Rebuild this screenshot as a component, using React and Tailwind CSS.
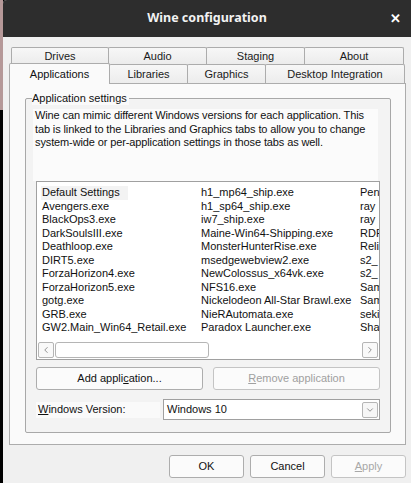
import { ChevronDown, ChevronLeft, ChevronRight } from "lucide-react";

const col1 = [
  "Default Settings",
  "Avengers.exe",
  "BlackOps3.exe",
  "DarkSoulsIII.exe",
  "Deathloop.exe",
  "DIRT5.exe",
  "ForzaHorizon4.exe",
  "ForzaHorizon5.exe",
  "gotg.exe",
  "GRB.exe",
  "GW2.Main_Win64_Retail.exe",
];

const col2 = [
  "h1_mp64_ship.exe",
  "h1_sp64_ship.exe",
  "iw7_ship.exe",
  "Maine-Win64-Shipping.exe",
  "MonsterHunterRise.exe",
  "msedgewebview2.exe",
  "NewColossus_x64vk.exe",
  "NFS16.exe",
  "Nickelodeon All-Star Brawl.exe",
  "NieRAutomata.exe",
  "Paradox Launcher.exe",
];

// third column is clipped by the list edge, only the visible part is kept
const col3 = ["Pen", "ray", "ray", "RDR", "Reli", "s2_", "s2_", "Sam", "Sam", "seki", "Sha"];

const Tab = ({ label, w }) => (
  <div
    className={`${w} h-full flex items-center justify-center border border-b-0 border-[#acacac] -ml-px first:ml-0 rounded-t-[2px] bg-gradient-to-b from-[#f7f7f7] to-[#ececec] text-[#1a1a1a]`}
  >
    {label}
  </div>
);

const Button = ({ children, className = "" }) => (
  <div
    className={`h-[23px] flex items-center justify-center border border-[#adadad] rounded-[3px] bg-[#fbfbfb] ${className}`}
  >
    {children}
  </div>
);

export default function App() {
  return (
    <div
      className="w-[411px] h-[483px] flex bg-black overflow-hidden text-[11px] text-[#111]"
      style={{ fontFamily: '"Liberation Sans", Arial, sans-serif' }}
    >
      {/* desktop strip */}
      <div className="w-[3px] flex flex-col">
        <div className="h-[110px] bg-[#b59898]" />
        <div className="flex-1 bg-black" />
      </div>

      {/* window */}
      <div className="flex-1 flex flex-col rounded-tl-[4px] overflow-hidden bg-[#f0f0f0]">
        <div className="h-[37px] bg-[#2d2d2d] relative flex items-center justify-center">
          <span
            className="text-[#f2f2f2] text-[12.5px] font-bold"
            style={{ fontFamily: '"Noto Sans", sans-serif' }}
          >
            Wine configuration
          </span>
          <span className="absolute right-[10px] top-[12px] text-white text-[13px] font-bold leading-none">
            ✕
          </span>
        </div>

        <div className="flex-1 flex flex-col pt-[10px]">
          {/* tabs row 1 */}
          <div className="h-[17px] flex ml-[8px]">
            <Tab label="Drives" w="w-[98px]" />
            <Tab label="Audio" w="w-[99px]" />
            <Tab label="Staging" w="w-[99px]" />
            <Tab label="About" w="w-[100px]" />
          </div>
          {/* tabs row 2 */}
          <div className="h-[19px] flex ml-[6px] relative z-10">
            <div className="w-[101px] h-[21px] -mt-[1px] flex items-center justify-center border border-b-0 border-[#acacac] rounded-t-[2px] bg-[#fafafa]">
              Applications
            </div>
            <Tab label="Libraries" w="w-[79px]" />
            <Tab label="Graphics" w="w-[79px]" />
            <Tab label="Desktop Integration" w="w-[140px]" />
          </div>

          {/* panel */}
          <div className="h-[362px] ml-[6px] mr-[5px] border border-[#acacac] bg-[#fafafa] pt-[14px] pl-[15px] pr-[14px]">
            <div className="relative h-[335px] border border-[#a8a8a8] rounded-[2px] bg-[#f3f3f3] px-[4px] pt-[10px]">
              <span className="absolute left-[6px] -top-[7px] bg-[#fafafa] pr-[2px] leading-[13px]">
                Application settings
              </span>
              <div className="ml-[3px] mr-[8px] h-[72px] bg-[#fbfbfb] px-[2px] leading-[13.5px] text-[11px] tracking-[-0.12px] whitespace-nowrap">
                Wine can mimic different Windows versions for each application. This
                <br />
                tab is linked to the Libraries and Graphics tabs to allow you to change
                <br />
                system-wide or per-application settings in those tabs as well.
              </div>

              {/* list */}
              <div className="ml-[6px] mr-[6px] h-[179px] border border-[#a0a0a0] bg-white flex flex-col">
                <div className="flex-1 flex pl-[5px] pt-[4px] overflow-hidden text-[11px] leading-[13.5px]">
                  <div className="w-[159px] shrink-0">
                    {col1.map((n, i) => (
                      <div key={n} className={i === 0 ? "w-[87px] bg-[#f3f3f3] -ml-px pl-px" : ""}>
                        {n}
                      </div>
                    ))}
                  </div>
                  <div className="w-[159px] shrink-0">
                    {col2.map((n) => (
                      <div key={n} className="whitespace-nowrap">
                        {n}
                      </div>
                    ))}
                  </div>
                  <div className="flex-1 overflow-hidden">
                    {col3.map((n, i) => (
                      <div key={i} className="whitespace-nowrap">
                        {n}
                      </div>
                    ))}
                  </div>
                </div>
                <div className="h-[17px] flex items-center px-[1px] pb-[1px] gap-[1px]">
                  <div className="w-[16px] h-[16px] border border-[#b5b5b5] rounded-[2px] bg-[#f9f9f9] flex items-center justify-center">
                    <ChevronLeft size={10} strokeWidth={1.5} className="text-[#555]" />
                  </div>
                  <div className="w-[154px] h-[16px] border border-[#b5b5b5] rounded-[3px] bg-white" />
                  <div className="flex-1" />
                  <div className="w-[16px] h-[16px] border border-[#b5b5b5] rounded-[2px] bg-[#f9f9f9] flex items-center justify-center">
                    <ChevronRight size={10} strokeWidth={1.5} className="text-[#555]" />
                  </div>
                </div>
              </div>

              {/* buttons */}
              <div className="ml-[6px] mr-[6px] mt-[7px] flex gap-[10px]">
                <Button className="flex-1">
                  <span>
                    Add appli<span className="underline">c</span>ation...
                  </span>
                </Button>
                <Button className="flex-1 text-[#a0a0a0] border-[#c4c4c4]">
                  <span>
                    <span className="underline">R</span>emove application
                  </span>
                </Button>
              </div>

              {/* version */}
              <div className="ml-[6px] mr-[6px] mt-[9px] flex items-center h-[21px]">
                <div className="w-[124px] h-[16px] bg-[#fafafa] pl-[2px] flex items-center">
                  <span>
                    <span className="underline">W</span>indows Version:
                  </span>
                </div>
                <div className="ml-[3px] flex-1 h-[21px] border border-[#a0a0a0] bg-white flex items-center pl-[3px] pr-[1px]">
                  <span className="flex-1">Windows 10</span>
                  <div className="w-[16px] h-[16px] border border-[#b5b5b5] rounded-[2px] bg-[#f6f6f6] flex items-center justify-center">
                    <ChevronDown size={10} strokeWidth={1.5} className="text-[#555]" />
                  </div>
                </div>
              </div>
            </div>
          </div>

          {/* dialog buttons */}
          <div className="flex justify-end gap-[6px] mr-[5px] mt-[10px]">
            <Button className="w-[75px] border-[#6b8fb8]">OK</Button>
            <Button className="w-[75px]">Cancel</Button>
            <Button className="w-[75px] text-[#a8a8a8] border-[#c4c4c4]">
              <span>
                <span className="underline">A</span>pply
              </span>
            </Button>
          </div>
        </div>
      </div>
    </div>
  );
}
